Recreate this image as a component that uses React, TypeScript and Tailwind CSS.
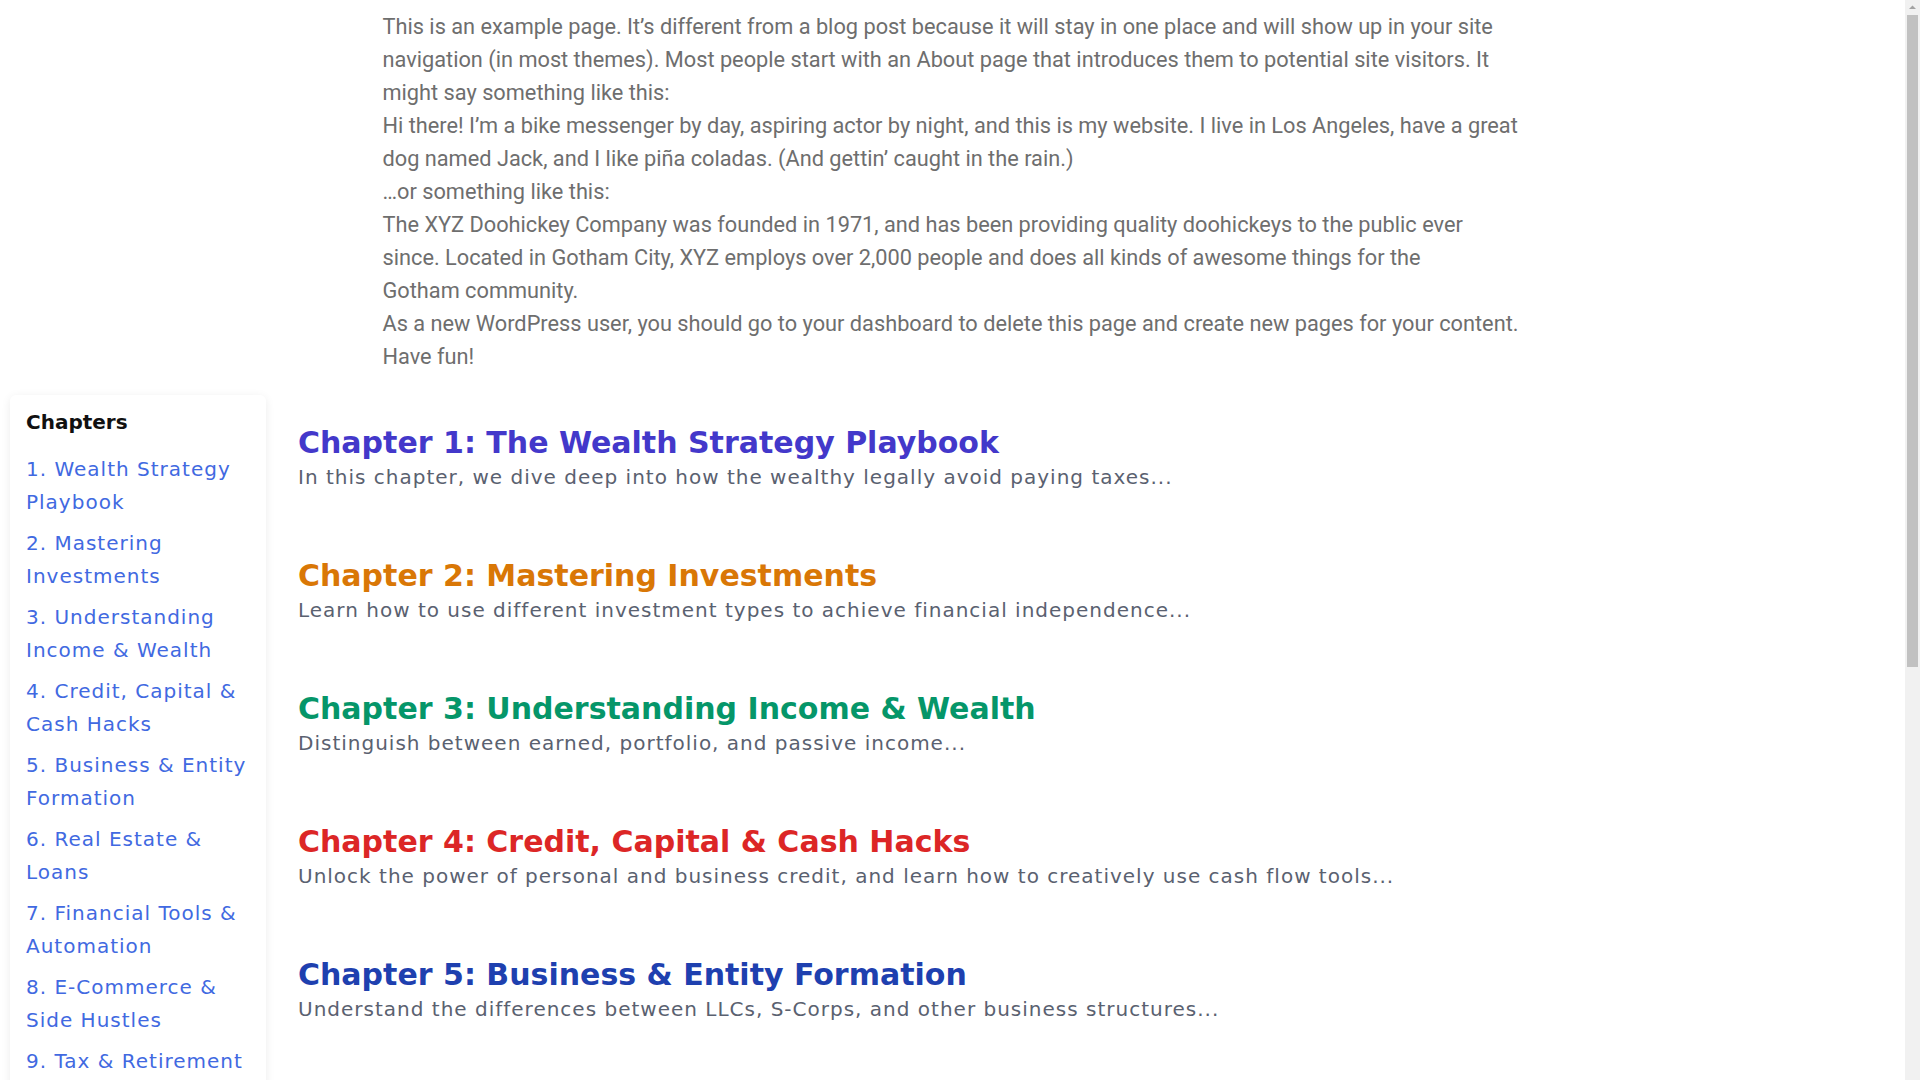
const intro = [
  "This is an example page. It’s different from a blog post because it will stay in one place and will show up in your site navigation (in most themes). Most people start with an About page that introduces them to potential site visitors. It might say something like this:",
  "Hi there! I’m a bike messenger by day, aspiring actor by night, and this is my website. I live in Los Angeles, have a great dog named Jack, and I like piña coladas. (And gettin’ caught in the rain.)",
  "…or something like this:",
  "The XYZ Doohickey Company was founded in 1971, and has been providing quality doohickeys to the public ever since. Located in Gotham City, XYZ employs over 2,000 people and does all kinds of awesome things for the Gotham\u00a0community.",
  "As a new WordPress user, you should go to your dashboard to delete this page and create new pages for your content. Have fun!",
]

const toc = [
  "1. Wealth Strategy Playbook",
  "2. Mastering Investments",
  "3. Understanding Income & Wealth",
  "4. Credit, Capital & Cash Hacks",
  "5. Business & Entity Formation",
  "6. Real Estate & Loans",
  "7. Financial Tools & Automation",
  "8. E-Commerce & Side Hustles",
  "9. Tax & Retirement Strategies",
  "10. Insurance & Asset Protection",
  "11. Legacy & Estate Planning",
  "12. Your Wealth Action Plan",
]

const chapters = [
  {
    title: "Chapter 1: The Wealth Strategy Playbook",
    text: "In this chapter, we dive deep into how the wealthy legally avoid paying taxes...",
    color: "text-[#4338ca]",
  },
  {
    title: "Chapter 2: Mastering Investments",
    text: "Learn how to use different investment types to achieve financial independence...",
    color: "text-[#d97706]",
  },
  {
    title: "Chapter 3: Understanding Income & Wealth",
    text: "Distinguish between earned, portfolio, and passive income...",
    color: "text-[#059669]",
  },
  {
    title: "Chapter 4: Credit, Capital & Cash Hacks",
    text: "Unlock the power of personal and business credit, and learn how to creatively use cash flow tools...",
    color: "text-[#dc2626]",
  },
  {
    title: "Chapter 5: Business & Entity Formation",
    text: "Understand the differences between LLCs, S-Corps, and other business structures...",
    color: "text-[#1e40af]",
  },
  {
    title: "Chapter 6: Real Estate & Loans",
    text: "Discover how investors use leverage and smart financing to build property portfolios...",
    color: "text-[#7c3aed]",
  },
  {
    title: "Chapter 7: Financial Tools & Automation",
    text: "Set up systems that save, invest and track your money automatically...",
    color: "text-[#0891b2]",
  },
  {
    title: "Chapter 8: E-Commerce & Side Hustles",
    text: "Turn your skills and spare time into reliable streams of extra income...",
    color: "text-[#db2777]",
  },
]

function Scrollbar() {
  return (
    <div className="w-[15px] shrink-0 h-screen bg-[#f1f1f1] flex flex-col items-center">
      <svg width="15" height="15" viewBox="0 0 15 15" className="shrink-0">
        <path d="M4 9 L7.5 5.5 L11 9 Z" fill="#a3a3a3" />
      </svg>
      <div className="w-[11px] h-[652px] bg-[#c1c1c1]" />
    </div>
  )
}

export default function App() {
  return (
    <div className="flex h-screen overflow-hidden bg-white">
      <div className="flex-1 min-w-0 h-screen overflow-hidden">
        <div className="max-w-[1140px] mx-auto pt-[10px] font-['Roboto',sans-serif] text-[21.76px] leading-[33px] text-[#6e6e6e]">
          {intro.map((p, i) => (
            <p key={i}>{p}</p>
          ))}
        </div>

        <div className="flex items-start gap-8 px-[10px] mt-[22px] font-['DejaVu_Sans',sans-serif]">
          <aside className="w-64 shrink-0 bg-white rounded-md shadow-[0_2px_10px_rgba(0,0,0,0.08)] p-4">
            <h3 className="text-[20px] leading-[22px] font-bold text-[#111111] mb-[20px]">Chapters</h3>
            <ul>
              {toc.map((item, i) => (
                <li key={i} className="mb-2">
                  <a href="#" className="text-[20px] leading-[33px] tracking-[1px] text-[#4169e1]">
                    {item}
                  </a>
                </li>
              ))}
            </ul>
          </aside>

          <main className="flex-1 -mt-[2px]">
            {chapters.map((c, i) => (
              <div key={i} className="pt-[32px] pb-[33px]">
                <h2 className={`text-[30px] leading-[36px] font-bold ${c.color}`}>{c.title}</h2>
                <p className="text-[20px] leading-[32px] tracking-[1px] text-[#5a6170]">{c.text}</p>
              </div>
            ))}
          </main>
        </div>
      </div>
      <Scrollbar />
    </div>
  )
}
